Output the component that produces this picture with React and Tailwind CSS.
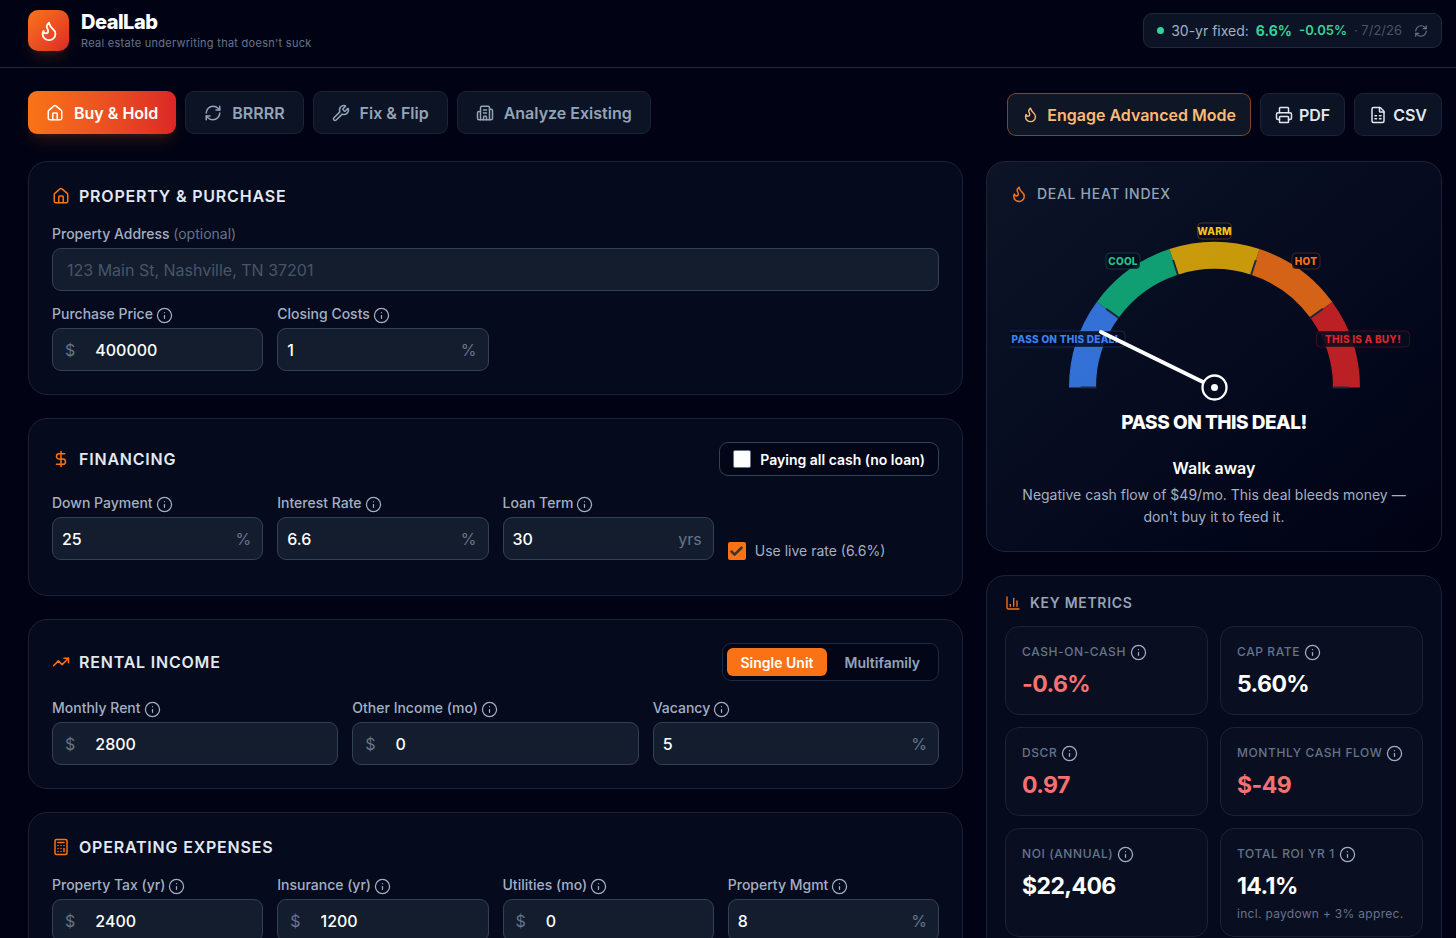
import { useState } from 'react';
import {
    Building2,
    Calculator,
    ChartColumn,
    Check,
    DollarSign,
    FileSpreadsheet,
    Flame,
    House,
    Info,
    Printer,
    RefreshCw,
    TrendingUp,
    Wrench,
} from 'lucide-react';

const TABS = [
    { id: 'hold', label: 'Buy & Hold', icon: House },
    { id: 'brrrr', label: 'BRRRR', icon: RefreshCw },
    { id: 'flip', label: 'Fix & Flip', icon: Wrench },
    { id: 'existing', label: 'Analyze Existing', icon: Building2 },
];

const METRICS = [
    { label: 'Cash-on-Cash', value: '-0.6%', bad: true },
    { label: 'Cap Rate', value: '5.60%' },
    { label: 'DSCR', value: '0.97', bad: true },
    { label: 'Monthly Cash Flow', value: '$-49', bad: true },
    { label: 'NOI (Annual)', value: '$22,406' },
    { label: 'Total ROI Yr 1', value: '14.1%', note: 'incl. paydown + 3% apprec.' },
];

// gauge geometry, in viewBox units
const CX = 204.5;
const CY = 174.5;
const SEGMENTS = ['#3b82f6', '#10b981', '#eab308', '#f97316', '#dc2626'];
const GAUGE_LABELS = [
    { text: 'PASS ON THIS DEAL!', x: 55, y: 126, w: 120, color: '#3b82f6' },
    { text: 'COOL', x: 113, y: 48, w: 34, color: '#1fc48d' },
    { text: 'WARM', x: 204.5, y: 18, w: 34, color: '#f5c518' },
    { text: 'HOT', x: 296, y: 48, w: 28, color: '#f97316' },
    { text: 'THIS IS A BUY!', x: 353, y: 126, w: 93, color: '#dc2626' },
];

function point(r, deg) {
    const a = (deg * Math.PI) / 180;
    return [CX - r * Math.cos(a), CY - r * Math.sin(a)];
}

function Gauge() {
    return (
        <svg viewBox="0 0 408 190" className="block w-full" role="img" aria-label="Deal heat gauge">
            {SEGMENTS.map((color, i) => {
                const [x1, y1] = point(132, i * 36);
                const [x2, y2] = point(132, (i + 1) * 36);
                return (
                    <path
                        key={color}
                        d={`M${x1} ${y1} A132 132 0 0 1 ${x2} ${y2}`}
                        fill="none"
                        stroke={color}
                        strokeWidth="27"
                        strokeOpacity="0.85"
                    />
                );
            })}
            {[0, 36, 72, 108, 144, 180].map((deg) => {
                const [x1, y1] = point(118, deg);
                const [x2, y2] = point(134, deg);
                return <line key={deg} x1={x1} y1={y1} x2={x2} y2={y2} stroke="#1e293b" strokeWidth="2" />;
            })}
            {GAUGE_LABELS.map((l) => (
                <g key={l.text}>
                    <rect
                        x={l.x - l.w / 2}
                        y={l.y - 8}
                        width={l.w}
                        height="16"
                        rx="4"
                        fill="#060b1d"
                        fillOpacity="0.85"
                        stroke={l.color}
                        strokeOpacity="0.25"
                    />
                    <text
                        x={l.x}
                        y={l.y + 4}
                        textAnchor="middle"
                        fill={l.color}
                        className="text-[10px] font-extrabold tracking-wide"
                    >
                        {l.text}
                    </text>
                </g>
            ))}
            <line x1="193" y1="169" x2="91" y2="119" stroke="#fff" strokeWidth="4" strokeLinecap="round" />
            <circle cx={CX} cy={CY} r="12" fill="#060b1d" stroke="#fff" strokeWidth="2.3" />
            <circle cx={CX} cy={CY} r="3.5" fill="#fff" />
        </svg>
    );
}

function Section({ icon: Icon, title, action, children, className = 'pb-[23px]' }) {
    return (
        <section className={`rounded-[19px] border border-[#1c2236] bg-[#050a1d] px-[23px] pt-[23px] ${className}`}>
            <div className="mb-[17px] flex items-center justify-between">
                <h2 className="flex items-center gap-[9px] text-[16px] leading-[22px] font-semibold tracking-wider text-[#e2e8f0] uppercase">
                    <Icon size={18} className="text-[#f97316]" />
                    {title}
                </h2>
                {action}
            </div>
            {children}
        </section>
    );
}

function Field({ id, label, value, prefix, suffix }) {
    const [current, setCurrent] = useState(value);
    return (
        <div>
            <div className="mb-1 flex items-center gap-[3px] text-[14px] leading-5 font-medium text-[#a3b0c4]">
                <label htmlFor={id}>{label}</label>
                <Info size={17} strokeWidth={1.75} className="mt-[2px]" aria-hidden="true" />
            </div>
            <div className="flex h-[43px] items-center rounded-[9px] border border-[#334155] bg-[#141d2d] text-[16px]">
                {prefix && <span className="pl-3 text-[#64748b]">{prefix}</span>}
                <input
                    id={id}
                    type="text"
                    value={current}
                    onChange={(e) => setCurrent(e.target.value)}
                    className={`h-full w-full min-w-0 flex-1 bg-transparent font-medium text-white outline-none ${prefix ? 'pl-5' : 'pl-[9px]'}`}
                />
                {suffix && <span className="pr-[11px] text-[#64748b]">{suffix}</span>}
            </div>
        </div>
    );
}

function Metric({ label, value, bad, note }) {
    return (
        <div className="rounded-[14px] border border-[#1a2234] bg-[#090f20] px-4 pt-4 pb-[14px]">
            <div className="flex items-center gap-[4px] text-[12px] leading-[18px] font-medium tracking-wider text-[#64748b] uppercase">
                {label}
                <Info size={17} strokeWidth={1.75} className="text-[#a3b0c4]" aria-hidden="true" />
            </div>
            <div className={`mt-[7px] text-[23px] leading-8 font-bold tracking-tight ${bad ? 'text-[#f87171]' : 'text-white'}`}>{value}</div>
            {note && <div className="mt-1 text-[12px] leading-4 tracking-wide text-[#64748b]">{note}</div>}
        </div>
    );
}

export default function App() {
    const [tab, setTab] = useState('hold');
    const [allCash, setAllCash] = useState(false);
    const [liveRate, setLiveRate] = useState(true);
    const [unitMode, setUnitMode] = useState('single');

    return (
        <div className="h-screen overflow-hidden bg-[#010314] font-['Inter','Liberation_Sans',sans-serif] text-white">
            <header className="flex items-center justify-between border-b border-[#23283a] pt-[9px] pr-[14px] pb-[15px] pl-7">
                <div className="flex items-center gap-3">
                    <div className="flex size-[41px] items-center justify-center rounded-[10px] bg-linear-to-br from-[#f97316] to-[#dc2626] shadow-lg shadow-[#f97316]/15">
                        <Flame size={22} />
                    </div>
                    <div>
                        <h1 className="text-[20px] leading-[26px] font-extrabold tracking-tight">DealLab</h1>
                        <p className="text-[11px] leading-[17px] tracking-wide text-[#64748b]">Real estate underwriting that doesn't suck</p>
                    </div>
                </div>
                <div className="flex h-[35px] items-center rounded-[9px] border border-[#1e293b] bg-[#0b1324] px-[13px] text-[14px]">
                    <span className="size-[7px] rounded-full bg-[#34d399]" />
                    <span className="ml-[7px] text-[#a3b0c4]">30-yr fixed:</span>
                    <span className="ml-[7px] font-bold text-[#34d399]">6.6%</span>
                    <span className="ml-[7px] text-[13px] font-semibold text-[#34d399]">-0.05%</span>
                    <span className="ml-[7px] text-[13px] text-[#475569]">· 7/2/26</span>
                    <button type="button" aria-label="Refresh rate" className="ml-3 text-[#64748b]">
                        <RefreshCw size={14} />
                    </button>
                </div>
            </header>

            <main className="pt-[23px] pr-[14px] pl-7">
                <div className="mb-[25px] flex items-end justify-between">
                    <nav className="mb-[2px] flex gap-[9px]">
                        {TABS.map(({ id, label, icon: Icon }) => (
                            <button
                                key={id}
                                type="button"
                                onClick={() => setTab(id)}
                                className={`flex h-[43px] items-center gap-[10px] rounded-[9px] px-[18px] text-[16px] font-semibold ${
                                    tab === id
                                        ? 'bg-linear-to-r from-[#f97316] to-[#dc2626] text-white shadow-lg shadow-[#f97316]/15'
                                        : 'border border-[#1a2436] bg-[#0b1324] text-[#94a3b8]'
                                }`}
                            >
                                <Icon size={18} />
                                {label}
                            </button>
                        ))}
                    </nav>
                    <div className="flex gap-[9px]">
                        <button type="button" className="flex h-[43px] items-center gap-2 rounded-[9px] border border-[#f97316]/50 bg-[#0f1626] px-[14px] text-[16px] font-semibold text-[#fdba74]">
                            <Flame size={17} />
                            Engage Advanced Mode
                        </button>
                        <button type="button" className="flex h-[43px] items-center gap-[6px] rounded-[9px] border border-[#1a2436] bg-[#0b1324] px-[14px] text-[16px] font-semibold text-[#e2e8f0]">
                            <Printer size={18} />
                            PDF
                        </button>
                        <button type="button" className="flex h-[43px] items-center gap-[6px] rounded-[9px] border border-[#1a2436] bg-[#0b1324] px-[14px] text-[16px] font-semibold text-[#e2e8f0]">
                            <FileSpreadsheet size={18} />
                            CSV
                        </button>
                    </div>
                </div>

                <div className="grid grid-cols-3 items-start gap-[23px]">
                    <div className="col-span-2 flex flex-col gap-[23px]">
                        {/* Property & Purchase */}
                        <Section icon={House} title="Property & Purchase">
                            <label htmlFor="address" className="mb-1 block text-[14px] leading-5 font-medium text-[#a3b0c4]">
                                Property Address <span className="font-normal text-[#64748b]">(optional)</span>
                            </label>
                            <input
                                id="address"
                                type="text"
                                placeholder="123 Main St, Nashville, TN 37201"
                                className="mb-[13px] block h-[43px] w-full rounded-[9px] border border-[#334155] bg-[#141d2d] px-[14px] text-[16px] text-white placeholder:text-[#475569]"
                            />
                            <div className="grid grid-cols-4 gap-[14px]">
                                <Field id="price" label="Purchase Price" value="400000" prefix="$" />
                                <Field id="closing" label="Closing Costs" value="1" suffix="%" />
                            </div>
                        </Section>

                        {/* Financing */}
                        <Section
                            icon={DollarSign}
                            title="Financing"
                            className="pb-[35px]"
                            action={
                                <label className="flex h-[34px] items-center gap-[9px] rounded-[9px] border border-[#334155] bg-[#020617] px-[13px] text-[14px] font-semibold">
                                    <input
                                        type="checkbox"
                                        checked={allCash}
                                        onChange={(e) => setAllCash(e.target.checked)}
                                        className="size-[18px] appearance-none rounded-xs border border-[#64748b] bg-white checked:bg-[#f97316]"
                                    />
                                    Paying all cash (no loan)
                                </label>
                            }
                        >
                            <div className="grid grid-cols-4 gap-[14px]">
                                <Field id="down" label="Down Payment" value="25" suffix="%" />
                                <Field id="rate" label="Interest Rate" value="6.6" suffix="%" />
                                <Field id="term" label="Loan Term" value="30" suffix="yrs" />
                                <label className="flex items-center gap-[9px] self-end text-[14px] leading-[18px] text-[#a3b0c4]">
                                    <span className="grid size-[18px] place-items-center">
                                        <input
                                            type="checkbox"
                                            checked={liveRate}
                                            onChange={(e) => setLiveRate(e.target.checked)}
                                            className="col-start-1 row-start-1 size-[18px] appearance-none rounded-xs bg-white checked:bg-[#f97316]"
                                        />
                                        {liveRate && <Check size={15} strokeWidth={4} className="pointer-events-none col-start-1 row-start-1 text-[#3f3428]" />}
                                    </span>
                                    Use live rate (6.6%)
                                </label>
                            </div>
                        </Section>

                        {/* Rental Income */}
                        <Section
                            icon={TrendingUp}
                            title="Rental Income"
                            action={
                                <div className="flex h-[38px] items-center gap-1 rounded-[9px] border border-[#1e293b] bg-[#020617] px-1 text-[14px] font-semibold">
                                    <button
                                        type="button"
                                        onClick={() => setUnitMode('single')}
                                        className={`h-7 rounded-md px-[13px] ${unitMode === 'single' ? 'bg-[#f97316] text-white' : 'text-[#94a3b8]'}`}
                                    >
                                        Single Unit
                                    </button>
                                    <button
                                        type="button"
                                        onClick={() => setUnitMode('multi')}
                                        className={`h-7 rounded-md px-[14px] ${unitMode === 'multi' ? 'bg-[#f97316] text-white' : 'text-[#94a3b8]'}`}
                                    >
                                        Multifamily
                                    </button>
                                </div>
                            }
                        >
                            <div className="grid grid-cols-3 gap-[14px]">
                                <Field id="rent" label="Monthly Rent" value="2800" prefix="$" />
                                <Field id="other" label="Other Income (mo)" value="0" prefix="$" />
                                <Field id="vacancy" label="Vacancy" value="5" suffix="%" />
                            </div>
                        </Section>

                        {/* Operating Expenses */}
                        <Section icon={Calculator} title="Operating Expenses">
                            <div className="grid grid-cols-4 gap-[14px]">
                                <Field id="tax" label="Property Tax (yr)" value="2400" prefix="$" />
                                <Field id="insurance" label="Insurance (yr)" value="1200" prefix="$" />
                                <Field id="utilities" label="Utilities (mo)" value="0" prefix="$" />
                                <Field id="mgmt" label="Property Mgmt" value="8" suffix="%" />
                            </div>
                        </Section>
                    </div>

                    <div className="flex flex-col gap-[23px]">
                        <section className="rounded-[19px] border border-[#1e2436] bg-linear-to-br from-[#0c1426] via-[#060b1f] to-[#010314] px-[23px] pt-[22px] pb-[23px]">
                            <h2 className="mb-[9px] flex items-center gap-[9px] text-[14px] leading-5 font-medium tracking-wider text-[#94a3b8] uppercase">
                                <Flame size={18} className="text-[#f97316]" />
                                Deal Heat Index
                            </h2>
                            <Gauge />
                            <p className="mt-2 text-center text-[19px] leading-6 font-extrabold tracking-tight">PASS ON THIS DEAL!</p>
                            <h3 className="mt-[21px] text-center text-[16px] leading-6 font-semibold">Walk away</h3>
                            <p className="mt-1 px-2 text-center text-[14px] leading-[22px] text-[#a3b0c4]">
                                Negative cash flow of $49/mo. This deal bleeds money — don't buy it to feed it.
                            </p>
                        </section>

                        <section className="rounded-[19px] border border-[#1c2236] bg-[#050a1d] px-[18px] pt-[17px] pb-[18px]">
                            <h2 className="mb-[13px] flex items-center gap-[9px] text-[14px] leading-5 font-semibold tracking-wider text-[#94a3b8] uppercase">
                                <ChartColumn size={16} className="text-[#f97316]" />
                                Key Metrics
                            </h2>
                            <div className="grid grid-cols-2 gap-3">
                                {METRICS.map((m) => (
                                    <Metric key={m.label} {...m} />
                                ))}
                            </div>
                        </section>
                    </div>
                </div>
            </main>
        </div>
    );
}
